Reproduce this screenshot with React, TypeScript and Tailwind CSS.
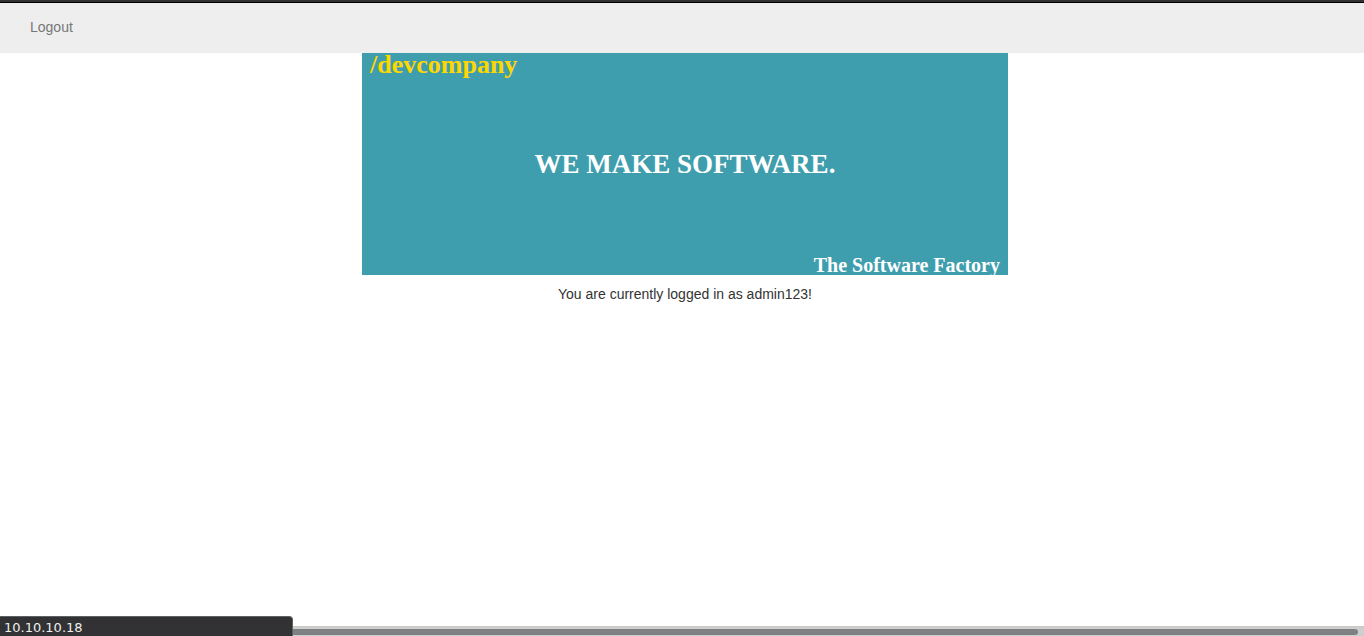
export default function App() {
  return (
    <div className="flex min-h-screen flex-col bg-white font-['Liberation_Sans',Arial,sans-serif] text-sm text-[#333333]">
      <div className="h-[3px] border-b border-black bg-[#323234]" />
      <nav className="flex h-[50px] items-center bg-[#eeeeee] px-[30px] pb-0.5">
        <a href="#logout" className="text-[#777777]">
          Logout
        </a>
      </nav>

      <main className="flex grow flex-col items-center pl-1.5">
        <section className="flex h-[222px] w-full max-w-[646px] flex-col justify-between bg-[#3f9eae] px-2 font-['Liberation_Serif','Times_New_Roman',serif] font-bold text-white">
          <p className="text-[26px] leading-6 text-[#ffd700]">/devcompany</p>
          <h1 className="pb-1 text-center text-[27px] leading-7">WE MAKE SOFTWARE.</h1>
          <p className="text-right text-[20px] leading-5">The Software Factory</p>
        </section>
        <p className="mt-2 leading-[22px]">You are currently logged in as admin123!</p>
      </main>

      <footer className="flex h-5 items-end">
        <div className="h-5 w-[293px] shrink-0 rounded-tr border-t border-r border-[#5c6161] bg-[#323234] pl-1 font-['DejaVu_Sans',sans-serif] text-[13px] leading-[22px] text-[#eeeeec]">
          10.10.10.18
        </div>
        <div className="h-[10px] grow border-t border-[#cdc7c2] bg-[#cecece] pt-0.5 pr-1.5">
          <div className="h-1.5 rounded-r-full bg-[#7e8181]" />
        </div>
      </footer>
    </div>
  );
}
